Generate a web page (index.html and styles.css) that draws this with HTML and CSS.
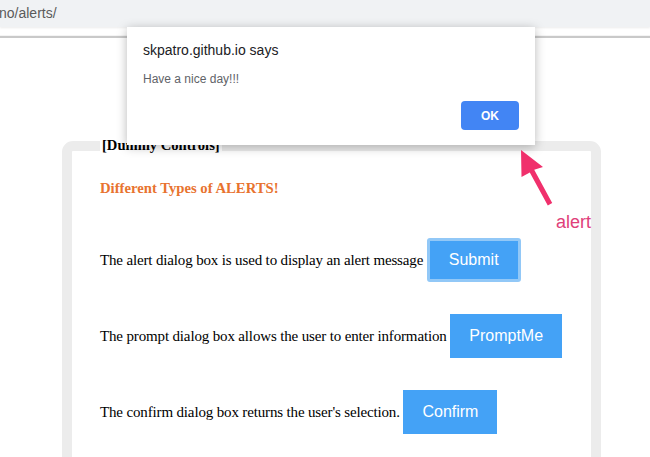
FILE: index.html
```html
<!DOCTYPE html>
<html lang="en">
<head>
<meta charset="utf-8">
<title>Alerts</title>
<link rel="stylesheet" href="styles.css">
</head>
<body>
  <header class="browser-bar">
    <span class="url">no/alerts/</span>
  </header>
  <div class="page-rule"></div>

  <main class="page">
    <fieldset class="controls">
      <legend class="controls-legend">[Dummy Controls]</legend>
      <h4 class="title">Different Types of ALERTS!</h4>
      <div class="rows">
        <p class="row">The alert dialog box is used to display an alert message <button class="btn btn-focus">Submit</button></p>
        <p class="row">The prompt dialog box allows the user to enter information <button class="btn">PromptMe</button></p>
        <p class="row">The confirm dialog box returns the user's selection. <button class="btn">Confirm</button></p>
      </div>
    </fieldset>
  </main>

  <div class="dialog">
    <div class="dialog-title">skpatro.github.io says</div>
    <div class="dialog-msg">Have a nice day!!!</div>
    <div class="dialog-actions">
      <button class="dialog-ok">OK</button>
    </div>
  </div>

  <svg class="annotation-arrow" width="60" height="70" viewBox="0 0 60 70">
    <path d="M11 5 L11.5 32 L19.8 27.5 L37.8 60.5 L42.2 58 L24.2 24.8 L33 22 Z" fill="#f0306c"/>
  </svg>
  <span class="annotation-label">alert</span>
</body>
</html>
```
FILE: styles.css
```css
html, body {
  margin: 0;
  padding: 0;
}
body {
  position: relative;
  width: 650px;
  height: 457px;
  overflow: hidden;
  background: #ffffff;
  font-family: "Liberation Serif", "Times New Roman", serif;
  color: #000;
}

.browser-bar {
  height: 27px;
  background: #f0f2f4;
  box-shadow: 0 1px 2px rgba(0,0,0,0.08);
  display: flex;
  align-items: center;
}
.url {
  font-family: "Liberation Sans", Arial, sans-serif;
  font-size: 14px;
  color: #5a5a5a;
  margin-left: -1px;
  margin-top: -2px;
}

.page-rule {
  height: 2px;
  margin-top: 8px;
  background: #c9c9c9;
  border-top: 1px solid #f4f4f4;
}

.page {
  padding-top: 99px;
}

.controls {
  margin: 0 49px 0 62px;
  border: 10px solid #ececec;
  border-radius: 11px;
  padding: 26px 20px 30px 28px;
  box-sizing: border-box;
}
.controls-legend {
  font-weight: bold;
  font-size: 14.6px;
  padding: 0 2px;
  margin-left: 0;
}

.title {
  margin: 0;
  font-size: 14.7px;
  font-weight: bold;
  color: #e8732f;
}

.rows {
  display: flex;
  flex-direction: column;
  gap: 32px;
  margin-top: 41px;
}
.row {
  margin: 0;
  font-size: 15px;
  letter-spacing: -0.15px;
}

.btn {
  font-family: "Liberation Sans", Arial, sans-serif;
  font-size: 16px;
  letter-spacing: 0;
  color: #ffffff;
  background: #44a2f6;
  border: 0;
  padding: 13px 19px;
  line-height: 18px;
  cursor: pointer;
}
.btn-focus {
  border: 3px solid #92c8f7;
  border-radius: 3px;
  padding: 10px 19px;
}

.dialog {
  position: absolute;
  left: 127px;
  top: 27px;
  width: 408px;
  height: 118px;
  box-sizing: border-box;
  background: #ffffff;
  box-shadow: 0 2px 10px rgba(0,0,0,0.28);
  padding: 14px 16px 0 16px;
  font-family: "Liberation Sans", Arial, sans-serif;
}
.dialog-title {
  font-size: 14px;
  color: #202124;
  line-height: 18px;
}
.dialog-msg {
  margin-top: 13px;
  font-size: 12px;
  color: #5f6368;
  line-height: 14px;
}
.dialog-actions {
  display: flex;
  justify-content: flex-end;
  margin-top: 15px;
}
.dialog-ok {
  width: 58px;
  height: 29px;
  border: 0;
  border-radius: 4px;
  background: #4285f4;
  color: #ffffff;
  font-family: "Liberation Sans", Arial, sans-serif;
  font-weight: bold;
  font-size: 12px;
}

.annotation-arrow {
  position: absolute;
  left: 510px;
  top: 145px;
}
.annotation-label {
  position: absolute;
  left: 556px;
  top: 212px;
  font-family: "Liberation Sans", Arial, sans-serif;
  font-size: 18px;
  color: #e0407a;
}
```
